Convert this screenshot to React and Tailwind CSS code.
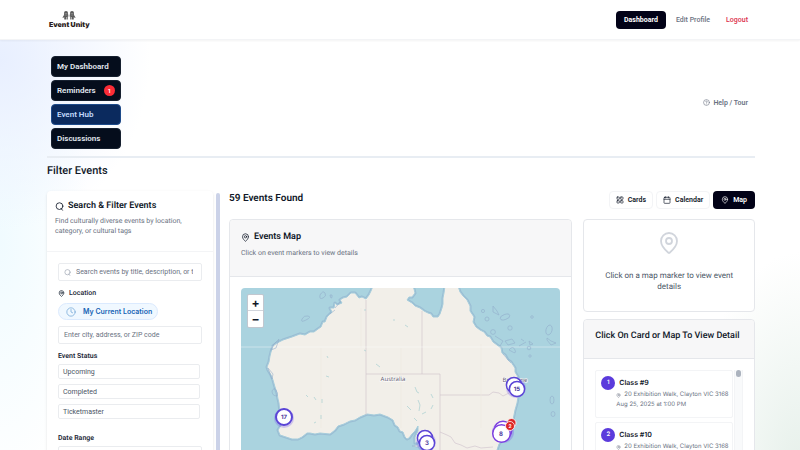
import React from "react";
import { MapPin, LayoutGrid, Calendar, CircleHelp, Clock } from "lucide-react";

const navItems = [
  { label: "My Dashboard" },
  { label: "Reminders", count: 1 },
  { label: "Event Hub", active: true },
  { label: "Discussions" },
];

const classes = [
  { id: 1, name: "Class #9" },
  { id: 2, name: "Class #10" },
];

const WEST_COAST =
  "M132 -2 L130 3 L128 7 L125 11 L121 9 L118 10 L114 5 L110 5 L106 9 L102 10 L99 12 L101 15 L96 17 L94 15 L93 20 L89 20 L91 24 L86 29 L84 34 L82 34 L80 39 L77 41 L73 44 L69 44 L64 47 L59 46 L51 49 L42 52 L36 55 L32 58 L30 64 L29 68 L28 74 L26 79 L27 82 L30 87 L32 92 L34 99 L36 105 L37 111 L38 115 L39 125 L41 131 L41 136 L37 142 L39 147 L45 149 L51 151 L57 151 L61 149 L66 145 L69 145 L74 146 L79 145 L89 146 L94 142 L97 138 L103 136 L109 133 L114 132 L119 129 L126 126 L133 127 L139 126 L147 129 L152 132 L154 137 L157 139 L159 143 L162 144 L164 149 L166 151 L168 150 L171 146 L174 143 L177 138 L177 143 L174 149 L174 155 L180 154 L182 160 L186 170";
const EAST_COAST =
  "L254 170 L256 162 L258 156 L262 151 L266 145 L270 137 L272 132 L273 127 L274 122 L276 115 L277 109 L278 99 L276 94 L277 89 L274 84 L274 80 L270 74 L267 72 L264 67 L261 65 L260 60 L256 57 L252 54 L249 49 L246 48 L243 44 L239 42 L235 39 L232 34 L233 29 L229 23 L229 18 L226 12 L222 8 L219 4 L217 -2";
const GULF =
  "L204 -2 L203 5 L202 10 L202 16 L201 20 L199 26 L197 29 L192 29 L190 26 L187 25 L183 23 L179 20 L174 18 L171 15 L166 12 L168 9 L171 9 L174 5 L173 1 L172 -2 Z";

function AustraliaMap() {
  return (
    <svg viewBox="0 0 320 190" className="block h-[190px] w-full" preserveAspectRatio="xMinYMin slice" role="img" aria-label="Map of Australia">
      <rect width="340" height="190" fill="#aad3df" />
      <path d={`${WEST_COAST} ${EAST_COAST} ${GULF}`} fill="none" stroke="#93b3cf" strokeWidth="3" strokeLinejoin="round" opacity=".7" />
      <path d={`${WEST_COAST} ${EAST_COAST} ${GULF}`} fill="#f2efe9" stroke="#a6cddb" strokeWidth="1" strokeLinejoin="round" />
      <g fill="none" stroke="#cdbfcb" strokeWidth=".6">
        <path d="M125 12V127M125 86H199M181 23V86M199 86V170" />
        <path d="M199 107H248L252 104L258 105L262 108L268 105L276 104" />
        <path d="M199 144L206 147L210 149L214 155L220 157L226 160L234 158L240 160L252 159" />
      </g>
      <path d="M120 20V60M160 60V140M240 56V140M80 60V140" stroke="#ece8e1" strokeWidth=".6" />
      <path d="M0 59H340" stroke="#fff" strokeWidth=".8" opacity=".5" />
      <g fill="none" stroke="#8fa9c9" strokeWidth=".7" opacity=".75">
        <path d="M79 7q3-5 5-2t-2 5t-3-3zM89 7q3-1 2 2t-2-2zM61 31q2-4 6-3t-2 4t-4-1z" />
        <path d="M30 62l3-6l5-5l-3 9zM27 80l5 6l-1 5zM31 103q2-4 4-1t1 6q-5 0-5-5z" />
        <circle cx="242" cy="23" r="1.600" />
        <circle cx="246" cy="31" r="2" />
        <circle cx="269" cy="40" r="2.200" />
        <circle cx="252" cy="44" r="2.400" />
        <circle cx="291" cy="29" r="1.300" />
        <circle cx="288" cy="60" r="1.800" />
        <circle cx="289" cy="68" r="1.200" />
        <ellipse cx="264" cy="29" rx="5" ry="2.500" transform="rotate(-20 264 29)" />
        <ellipse cx="308" cy="42" rx="3" ry="5" transform="rotate(15 308 42)" />
        <ellipse cx="311" cy="112" rx="2" ry="4" />
        <ellipse cx="312" cy="126" rx="2" ry="2.500" />
        <path d="M252 18l4 5l2 4l-6-3zM264 53l7-2l3 4l-7 2zM268 62q4-5 6 0t-4 1zM280 51l3 2M288 53l4 3l-3 1zM306 50l4 3l5 2l-5 2l-4-5z" />
        <path d="M254 48l8 5l-3 5M262 66l8 9M94 20l6-7M89 26l5-4M285 54l-7 4" />
      </g>
      <g fill="none" stroke="#a9d0d2" strokeWidth="1" opacity=".7">
        <path d="M174 99l2 5l2 1M177 112l2 5l-1 6M190 106l2 4M192 117l-2 4M166 118l4 4M181 126l4-2M173 130l3 3" />
        <path d="M65 107l2 2M73 109l2 3M81 111v4M80 127v4M73 135l2-1M86 68l1 2M85 88l3 1M135 76l4 3M164 37l3 2M152 32h2M124 21v2M123 62l2 1" />
      </g>
      <path d="M171 158l5-1l4 1l-4 1z" fill="#f2efe9" stroke="#8fb4cf" strokeWidth=".6" />
      <g className="font-['Noto_Sans']" fontSize="6" fill="#5f5a70" stroke="#fff" strokeWidth="1" paintOrder="stroke">
        <text x="152" y="93" textAnchor="middle">Australia</text>
        <text x="274" y="94" textAnchor="middle">Brisbane</text>
      </g>
      <g fill="#fff" stroke="#5b45d6" strokeWidth="2">
        <circle cx="43" cy="130" r="10" fill="#7c5cf0" stroke="none" opacity=".3" />
        <circle cx="43" cy="129" r="8" />
        <circle cx="275" cy="100" r="10" fill="#7c5cf0" stroke="none" opacity=".3" />
        <circle cx="273" cy="97" r="7.600" strokeWidth="1.500" />
        <circle cx="276" cy="101" r="7.600" strokeWidth="1.500" />
        <circle cx="185" cy="154" r="10" fill="#7c5cf0" stroke="none" opacity=".3" />
        <circle cx="184" cy="150" r="7.600" strokeWidth="1.500" />
        <circle cx="186" cy="155" r="7.600" strokeWidth="1.500" />
        <circle cx="262" cy="144" r="11" fill="#7c5cf0" stroke="none" opacity=".35" />
        <circle cx="262" cy="142" r="8.800" stroke="#7c3fe0" strokeWidth="1.500" />
        <circle cx="260.500" cy="145.500" r="8.800" stroke="#7c3fe0" strokeWidth="1.500" />
      </g>
      <g fill="#dc2626" stroke="#fff" strokeWidth=".8">
        <circle cx="270.500" cy="135" r="4.500" />
        <circle cx="269" cy="138" r="4.500" />
      </g>
      <g className="font-['Inter']" fontSize="6" fontWeight="700" fill="#4c3a9e" textAnchor="middle">
        <text x="43" y="131">17</text>
        <text x="276" y="103">15</text>
        <text x="186" y="157">3</text>
        <text x="260" y="148">8</text>
        <text x="269" y="140" fill="#fff" fontSize="5">2</text>
      </g>
    </svg>
  );
}

function SearchMark({ className }) {
  return (
    <svg viewBox="0 0 24 24" className={className} fill="none" stroke="currentColor" strokeWidth="2.200" strokeLinecap="round" aria-hidden="true">
      <circle cx="12" cy="11" r="9" />
      <path d="M16 17l4 5" />
    </svg>
  );
}

function Logo() {
  return (
    <a href="#home" aria-label="Event Unity" className="flex flex-col items-center">
      <svg viewBox="0 0 28 18" className="h-[9px] w-[14px]" fill="#5b5b5b" aria-hidden="true">
        <path d="M8 0a4 4 0 0 1 4 4v1l1 6h-1.500v6H9v-5H8v5H4.500v-5L2 14l-1-1l3-5V4a4 4 0 0 1 4-4z" />
        <path d="M20 0a4 4 0 0 0-4 4v1l-1 6h1.500v6H19v-5h1v5h3.500v-5l2.500 2l1-1l-3-5V4a4 4 0 0 0-4-4z" />
        <path d="M5 5h6M5 8h6M17 5h6M17 8h6" stroke="#fff" strokeWidth=".5" />
      </svg>
      <span className="font-['Inter'] text-[7px] leading-[9px] font-black text-[#2b2020]">Event Unity</span>
    </a>
  );
}

export default function App() {
  return (
    <div className="h-screen overflow-hidden bg-white font-['Roboto','Inter',sans-serif] text-[7px] leading-[10px] text-gray-900 [text-rendering:geometricPrecision]">
      <header className="relative flex h-10 items-center justify-between border-b border-gray-100 bg-white pr-[45px] pl-[49px] shadow-xs">
        <Logo />
        <nav className="flex items-center font-medium text-gray-500">
          <button className="h-[18px] rounded bg-[#020217] px-2 font-bold text-white">Dashboard</button>
          <button className="ml-[10px]">Edit Profile</button>
          <button className="mr-[7px] ml-4 text-[#dc2f4c]">Logout</button>
        </nav>
      </header>

      <main className="min-h-[410px] bg-[radial-gradient(ellipse_150px_170px_at_0px_20px,#e8efff,transparent),radial-gradient(ellipse_90px_260px_at_0px_200px,#f0fbff,transparent),radial-gradient(ellipse_110px_220px_at_100%_90%,#e6f0ea,transparent)] pr-[45px] pl-[47px]">
        <div className="flex items-center justify-between border-b-2 border-[#e8edf3] px-1 pt-4 pb-[7px]">
          <nav className="flex w-[70px] flex-col gap-[3px]">
            {navItems.map((item) => (
              <button
                key={item.label}
                className={`flex h-[21px] items-center justify-between rounded border px-[5px] text-[8px] font-semibold ${
                  item.active ? "border-[#1d4a8a] bg-[#0b2a5e] text-[#c3dafc]" : "border-[#16202f] bg-[#050d1c] text-slate-200"
                }`}
              >
                {item.label}
                {item.count && (
                  <span className="flex size-[11px] items-center justify-center rounded-full bg-red-500 text-[6px] text-white">{item.count}</span>
                )}
              </button>
            ))}
          </nav>
          <button className="mr-[3px] flex items-center gap-[3px] font-semibold text-gray-500">
            <CircleHelp size={7} strokeWidth={2} />
            Help / Tour
          </button>
        </div>

        <h1 className="mt-[5px] text-[11px] leading-4 font-medium">Filter Events</h1>

        <div className="mt-3 grid grid-cols-[173px_minmax(0,1fr)] gap-[9px]">
          <aside className="flex h-[300px] justify-between">
            <div className="w-[166px] rounded-t bg-white shadow-sm">
              <div className="border-b border-gray-100 px-2 pt-[10px] pb-[15px]">
                <h2 className="flex items-center gap-1 text-[9px] leading-[10px] font-semibold">
                  <SearchMark className="size-[9px]" />
                  Search &amp; Filter Events
                </h2>
                <p className="mt-[5px] text-gray-500">Find culturally diverse events by location, category, or cultural tags</p>
              </div>
              <form className="flex flex-col px-[11px] pt-[11px]" onSubmit={(e) => e.preventDefault()}>
                <label className="flex h-[18px] items-center gap-[5px] rounded-xs border border-gray-200/80 pr-2 pl-[5px]">
                  <SearchMark className="size-[7px] shrink-0 text-gray-400" />
                  <input aria-label="Search events" className="w-full min-w-0 outline-none placeholder:text-gray-500" placeholder="Search events by title, description, or tags" />
                </label>
                <label htmlFor="place" className="mt-[7px] flex items-center gap-1 font-medium text-gray-800">
                  <MapPin size={7} strokeWidth={2.500} />
                  Location
                </label>
                <button type="button" className="mt-[5px] flex h-[17px] w-[100px] items-center gap-[7px] rounded-full border border-blue-100 bg-[#f0f8ff] px-[7px] font-['Inter'] font-semibold whitespace-nowrap text-[#1764b5]">
                  <Clock size={10} strokeWidth={1.500} className="shrink-0 text-[#5c98cf]" />
                  My Current Location
                </button>
                <input id="place" className="mt-[6px] h-[18px] rounded-xs border border-gray-200/80 px-[5px] placeholder:text-gray-500" placeholder="Enter city, address, or ZIP code" />
                <h3 className="mt-[7px] font-semibold text-gray-800">Event Status</h3>
                <div className="mt-[3px] flex flex-col gap-[5px] pr-[2px]">
                  {["Upcoming", "Completed", "Ticketmaster"].map((s) => (
                    <button key={s} type="button" className="h-[15px] rounded-xs border border-gray-200/80 px-1 text-left text-gray-600">{s}</button>
                  ))}
                </div>
                <label htmlFor="dates" className="mt-[14px] font-semibold text-gray-800">Date Range</label>
                <input id="dates" className="mt-[3px] h-[18px] rounded-xs border border-gray-200/80 px-[5px]" />
              </form>
            </div>
            <div className="mt-[2px] w-1 rounded-full bg-[#cbd2e8]" />
          </aside>

          <section>
            <div className="flex items-start justify-between">
              <h2 className="text-[10px] leading-[15px] font-semibold">59 Events Found</h2>
              <div className="flex gap-[3px] font-semibold">
                <button className="flex h-[18px] items-center gap-1 rounded border border-gray-100 bg-white px-[6px]"><LayoutGrid size={8} />Cards</button>
                <button className="flex h-[18px] items-center gap-1 rounded border border-gray-100 bg-white px-[6px]"><Calendar size={8} />Calendar</button>
                <button className="flex h-[18px] items-center gap-1 rounded bg-[#020217] px-2 text-white"><MapPin size={8} />Map</button>
              </div>
            </div>

            <div className="mt-[10px] grid grid-cols-[minmax(0,2fr)_minmax(0,1fr)] gap-[11px]">
              <div className="rounded border border-gray-200 bg-white">
                <div className="h-[57px] rounded-t border-b border-gray-200 bg-[#f7f7f8] px-[11px] pt-[11px]">
                  <h3 className="flex items-center gap-1 text-[9px] leading-3 font-semibold"><MapPin size={9} />Events Map</h3>
                  <p className="mt-[5px] text-gray-500">Click on event markers to view details</p>
                </div>
                <div className="p-[11px]">
                  <div className="relative overflow-hidden rounded">
                    <AustraliaMap />
                    <div className="absolute top-[6px] left-[6px] flex w-[17px] flex-col divide-y divide-gray-300 rounded-xs border border-gray-400/60 bg-white font-['Inter'] text-[12px] font-bold">
                      <button aria-label="Zoom in" className="h-4">+</button>
                      <button aria-label="Zoom out" className="h-4">−</button>
                    </div>
                  </div>
                </div>
              </div>

              <div className="flex min-w-0 flex-col gap-[7px]">
                <div className="flex h-[93px] flex-col items-center rounded border border-gray-200 bg-white px-4 pt-[11px] text-center text-[8px] leading-[11px] text-gray-600">
                  <MapPin size={24} strokeWidth={1.800} className="text-gray-300" />
                  <p className="mt-[15px]">Click on a map marker to view event details</p>
                </div>
                <div className="rounded border border-gray-200 bg-white">
                  <h3 className="h-[39px] rounded-t border-b border-gray-200 bg-[#f7f7f8] px-[11px] pt-[11px] text-[9px] leading-[10px] font-medium whitespace-nowrap">Click On Card or Map To View Detail</h3>
                  <div className="flex h-40 justify-between overflow-hidden pt-[11px] pr-[11px] pl-[11px]">
                    <ul className="flex w-[138px] flex-col gap-1 font-['Inter']">
                      {classes.map((c) => (
                        <li key={c.id} className="flex h-12 shrink-0 gap-px rounded-xs border border-gray-100 px-[5px] pt-[5px] text-[6px] text-gray-500">
                          <span className="flex size-[14px] shrink-0 items-center justify-center rounded-full bg-[#5b3bdc] font-semibold text-white">{c.id}</span>
                          <div className="whitespace-nowrap">
                            <h4 className="ml-[3px] text-[7px] leading-[14px] font-semibold text-gray-900">{c.name}</h4>
                            <p className="flex items-center gap-[3px]"><MapPin size={5} />20 Exhibition Walk, Clayton VIC 3168</p>
                            <p>Aug 25, 2025 at 1:00 PM</p>
                          </div>
                        </li>
                      ))}
                    </ul>
                    <div className="w-[9px] border-x border-gray-100 bg-gray-50 px-px">
                      <div className="h-[7px] rounded-full bg-gray-400/80" />
                    </div>
                  </div>
                </div>
              </div>
            </div>
          </section>
        </div>
      </main>
    </div>
  );
}
